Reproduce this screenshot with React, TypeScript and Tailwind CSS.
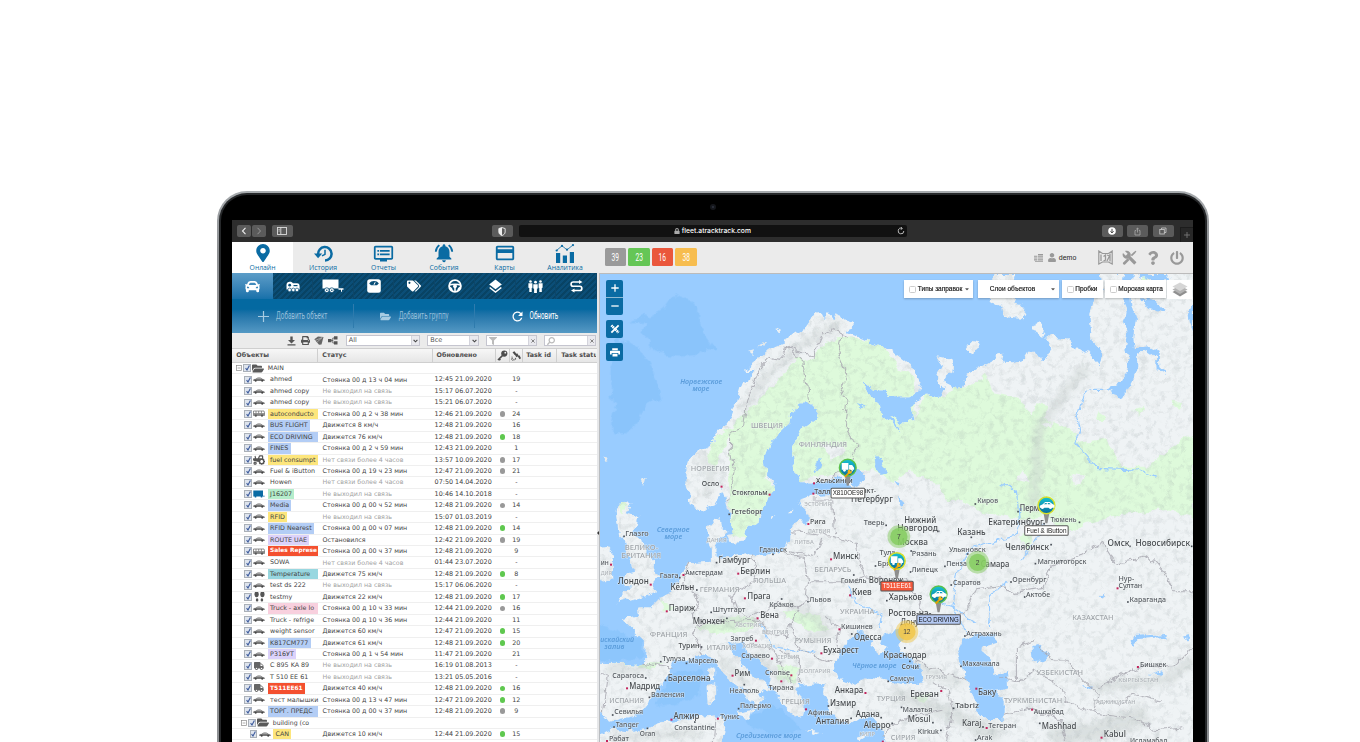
import React from "react";
import { FaMapMarkerAlt, FaCar, FaTags, FaFolderOpen, FaPrint, FaUser, FaPowerOff, FaTruck, FaTractor, FaLock, FaSearch, FaFilter, FaKey, FaQuestion, FaCaretDown } from "react-icons/fa";
import { MdDvr, MdNotificationsActive, MdCreditCard, MdLayers, MdRefresh } from "react-icons/md";

type Kids = { children?: React.ReactNode };

/* ---------- browser chrome ---------- */

function ChromeButton({ children, w = "w-[21px]" }: Kids & { w?: string }) {
  return <div className={`${w} flex h-[12.5px] items-center justify-center rounded-[2px] bg-[#5b5b5b] text-[#e6e6e6]`}>{children}</div>;
}

function BrowserBar() {
  return (
    <div className="flex h-[22px] shrink-0 items-center bg-[#2d2d2d] pl-[4.5px]">
      <ChromeButton w="w-[14px]">
        <svg className="h-[8px] w-[6px]" viewBox="0 0 6 8" fill="none" stroke="#eee" strokeWidth="1.100"><path d="M4.500 .8 1.500 4l3 3.200" /></svg>
      </ChromeButton>
      <div className="w-px" />
      <ChromeButton w="w-[14px]">
        <svg className="h-[8px] w-[6px]" viewBox="0 0 6 8" fill="none" stroke="#999" strokeWidth="1"><path d="M1.500 .8l3 3.200-3 3.200" /></svg>
      </ChromeButton>
      <div className="w-[6px]" />
      <ChromeButton>
        <svg className="h-[8px] w-[10px]" viewBox="0 0 10 8" fill="none" stroke="#ddd" strokeWidth=".9"><rect x=".5" y=".5" width="9" height="7" /><path d="M3.800 .5v7M1.500 2.400h1.200M1.500 4h1.200" /></svg>
      </ChromeButton>
      <div className="w-[199px]" />
      <ChromeButton>
        <svg className="h-[9px] w-[8px]" viewBox="0 0 7 8"><path d="M3.500 .5 6.300 1.400v3C6.300 6 5 7 3.500 7.600 2 7 .7 6 .7 4.400V1.400z" fill="none" stroke="#eee" strokeWidth=".8" /><path d="M3.500 .5v7.100C2 7 .7 6 .7 4.400V1.400z" fill="#eee" /></svg>
      </ChromeButton>
      <div className="ml-[6px] flex h-[12px] w-[388px] items-center rounded-[2px] bg-[#111]">
        <div className="w-[155px]" />
        <FaLock className="h-[6px] w-[6px] text-[#aaa]" />
        <span className="ml-[2px] font-['Inter',sans-serif] text-[6.750px] font-medium leading-none text-white">fleet.atracktrack.com</span>
        <div className="grow" />
        <svg className="mr-[2px] h-[8px] w-[8px]" viewBox="0 0 8 8" fill="none" stroke="#ccc" strokeWidth=".9"><path d="M6.800 4A2.800 2.800 0 1 1 5 1.400M3.800 .1 5.300 1.400 3.900 2.800" /></svg>
      </div>
      <div className="w-[195px]" />
      <ChromeButton>
        <svg className="h-[8px] w-[8px]" viewBox="0 0 8 8"><circle cx="4" cy="4" r="3.800" fill="#fff" /><path d="M4 1.800v4M2.400 4.300 4 5.900l1.600-1.600" stroke="#444" fill="none" strokeWidth="1" /></svg>
      </ChromeButton>
      <div className="w-[4.500px]" />
      <ChromeButton>
        <svg className="h-[9px] w-[7px]" viewBox="0 0 7 8" fill="none" stroke="#aaa" strokeWidth=".8"><path d="M2.200 3H1v4.500h5V3H4.800M3.500 5V.6M2.200 1.800 3.500 .5l1.300 1.300" /></svg>
      </ChromeButton>
      <div className="w-[4.500px]" />
      <ChromeButton>
        <svg className="h-[8px] w-[8px]" viewBox="0 0 8 8" fill="none" stroke="#ccc" strokeWidth=".8"><rect x=".8" y="2.500" width="4.500" height="4.500" /><path d="M2.500 2.500V1h4.500v4.500H5.300" /></svg>
      </ChromeButton>
      <div className="grow" />
      <div className="flex h-[15px] w-[13.500px] items-center justify-center self-end border-l border-t border-[#1c1c1c] bg-[#272727]">
        <svg className="h-[6px] w-[6px]" viewBox="0 0 6 6" stroke="#777" strokeWidth=".9"><path d="M3 0v6M0 3h6" /></svg>
      </div>
    </div>
  );
}

/* ---------- top navigation ---------- */

function AnalyticsIcon() {
  return (
    <svg className="h-[19px] w-[20px]" viewBox="0 0 20 19" fill="#0a6ba3">
      <path d="M1 9h4.200v10H1zM7.800 11.500H12V19H7.800zM14.800 8H19v11h-4.200z" />
      <path d="M1.500 6.500 7 1.800l5 4L18 1" fill="none" stroke="#0a6ba3" strokeWidth=".8" />
      <circle cx="1.700" cy="6.500" r="1.100" /><circle cx="7" cy="1.900" r="1.100" /><circle cx="12" cy="5.700" r="1.100" /><circle cx="18" cy="1.100" r="1.100" />
    </svg>
  );
}

function HistoryIcon() {
  return (
    <svg className="h-[17px] w-[19px]" viewBox="0 0 19 17">
      <path d="M4.200 9.500A6.700 6.700 0 1 1 11 15.500" fill="none" stroke="#0a6ba3" strokeWidth="2.500" />
      <path d="M0 8.500h8.200L4.100 13.200z" fill="#0a6ba3" />
      <path d="M11 4.800v4.500L8 10.800" fill="none" stroke="#0a6ba3" strokeWidth="1.500" />
    </svg>
  );
}

const NAV: { label: string; icon: React.ReactNode }[] = [
  { label: "Онлайн", icon: <FaMapMarkerAlt className="h-[18px] w-[14px]" /> },
  { label: "История", icon: <HistoryIcon /> },
  { label: "Отчеты", icon: <MdDvr className="h-[21px] w-[21px]" /> },
  { label: "События", icon: <MdNotificationsActive className="h-[22px] w-[22px]" /> },
  { label: "Карты", icon: <MdCreditCard className="h-[22px] w-[22px]" /> },
  { label: "Аналитика", icon: <AnalyticsIcon /> },
];

const COUNTERS: [string, string][] = [["39", "bg-[#9a9a9a]"], ["23", "bg-[#65c656]"], ["16", "bg-[#ea573c]"], ["38", "bg-[#f7bd4f]"]];

function AppHeader() {
  return (
    <div className="flex h-[31px] shrink-0 bg-[#ebebeb]">
      <div className="flex w-[364px]">
        {NAV.map((n, i) => (
          <div key={n.label} className={`flex w-[60.500px] shrink-0 flex-col items-center text-[#0a6ba3] ${i === 0 ? "bg-white" : ""}`}>
            <div className="flex h-[21.500px] items-center pt-[1px]">{n.icon}</div>
            <span className="font-['Open_Sans',sans-serif] text-[6.800px] leading-[8px]">{n.label}</span>
          </div>
        ))}
      </div>
      <div className="ml-[8.700px] mt-[6px] flex gap-[2.300px]">
        {COUNTERS.map(([n, c]) => (
          <div key={n} className={`flex h-[18px] w-[21.200px] items-center justify-center rounded-[1.500px] ${c}`}>
            <span className="inline-block scale-x-[.6] font-['Roboto',sans-serif] text-[11px] leading-none text-white">{n}</span>
          </div>
        ))}
      </div>
      <div className="grow" />
      <div className="mr-[9px] flex items-center text-[#999]">
        <svg className="h-[8px] w-[9px]" viewBox="0 0 9 8" fill="#999"><path d="M4 0h5v1H4zM4 1.600h5v1.200H4zM4 3.400h5v1.200H4zM4 5.200h5v1.200H4zM0 1.800h3.400v1H0zM0 3.400h3.400v1.200H0zM0 5.200h3.400v1.200H0zM1 7h8v.8H1z" /></svg>
        <FaUser className="ml-[5px] h-[9px] w-[8px]" />
        <span className="ml-[3px] font-['Liberation_Sans',sans-serif] text-[7px] leading-none text-[#222]">demo</span>
        <svg className="ml-[22px] h-[15px] w-[15px]" viewBox="0 0 15 15" fill="none" stroke="#999" strokeWidth="1.200"><path d="M.8 1 4.500 3.500h6L14.200 1v13l-3.700-2h-6l-3.700 2z" /><path d="M3 4.500v6.500M5.500 6.500l2-1.500v5l-2 1M9 5l2.500 1-2.500 5M12 3.500v8" strokeWidth="1.300" /></svg>
        <svg className="ml-[9px] h-[15px] w-[15px]" viewBox="0 0 24 24" fill="#999"><path d="M22.700 19l-9.100-9.100c.9-2.300.4-5-1.500-6.900-2-2-5-2.400-7.400-1.300L9 6 6 9 1.600 4.700C.4 7.100.9 10.100 2.900 12.100c1.900 1.900 4.600 2.400 6.900 1.500l9.100 9.100c.4.400 1 .4 1.400 0l2.300-2.300c.5-.4.5-1.100.1-1.400z" /><path d="M14 8l5-5 3-2 1 1-2 3-5 5zM1.500 20.500 9 13l3 3-7.500 7.500c-2 .5-3.500-1-3-3z" /></svg>
        <FaQuestion className="ml-[9px] h-[14px] w-[14px]" />
        <FaPowerOff className="ml-[10px] h-[14px] w-[14px]" />
      </div>
    </div>
  );
}

/* ---------- left panel ---------- */

const TABS: React.ReactNode[] = [
  <FaCar className="h-[15px] w-[15px]" />,
  <svg className="h-[11px] w-[14px]" viewBox="0 0 14 11" fill="#fff"><path d="M.5 4C.5 1.500 2 .8 3.800 .8S6.500 1.500 7 2.200h4c1.800 0 2.600 1.300 2.600 3v3.300H.5z" /><circle cx="3.700" cy="4.200" r="1.400" fill="#0b4f78" /><path d="M7.500 4h4v1.200h-4z" fill="#0b4f78" /><circle cx="3.600" cy="8.900" r="1.800" stroke="#0b4f78" strokeWidth=".7" /><circle cx="7.300" cy="8.900" r="1.800" stroke="#0b4f78" strokeWidth=".7" /><circle cx="11" cy="8.900" r="1.800" stroke="#0b4f78" strokeWidth=".7" /></svg>,
  <svg className="h-[14px] w-[22px]" viewBox="0 0 22 14" fill="#fff"><path d="M.5 .5h16v9H.5zM16.500 9.200h5v1.500H20v2h-1v-2h-2.500z" /><circle cx="4.800" cy="11.200" r="2.400" stroke="#0b4f78" strokeWidth=".8" /><circle cx="9.800" cy="11.200" r="2.400" stroke="#0b4f78" strokeWidth=".8" /><circle cx="4.800" cy="11.200" r=".8" fill="#0b4f78" /><circle cx="9.800" cy="11.200" r=".8" fill="#0b4f78" /></svg>,
  <svg className="h-[14px] w-[14px]" viewBox="0 0 14 14"><rect x=".2" y=".2" width="13.600" height="13.600" rx="2.500" fill="#fff" /><path d="M2.200 4.500C4 1.200 10 1.200 11.800 4.500L10 6.300H4z" fill="#0b4f78" /><path d="M7 5.800 8.200 3.200" stroke="#fff" strokeWidth="1" /></svg>,
  <FaTags className="h-[14px] w-[14px]" />,
  <svg className="h-[14px] w-[14px]" viewBox="0 0 14 14" fill="none" stroke="#fff"><circle cx="7" cy="7" r="5.900" strokeWidth="1.800" /><path d="M1.500 6.200C4 4.800 10 4.800 12.500 6.200M7 7v5.500M4 12c0-2-1-3.200-2.500-3.800M10 12c0-2 1-3.200 2.500-3.800" strokeWidth="1.500" /><circle cx="7" cy="7.300" r="1.500" fill="#fff" /></svg>,
  <MdLayers className="h-[17px] w-[17px]" />,
  <svg className="h-[13px] w-[15px]" viewBox="0 0 15 13" fill="#fff"><circle cx="2.500" cy="1.500" r="1.300" /><circle cx="7.500" cy="2.200" r="1.400" /><circle cx="12.500" cy="1.500" r="1.300" /><path d="M.4 3.300h4v4.500l-.7.300V12H1.300V8.100L.4 7.800zM5.300 4.200h4.400v4.200l-.8.400V13H6.100V8.800l-.8-.4zM10.600 3.300h4v4.500l-.8.300V12h-2.500V8.100l-.7-.3z" /></svg>,
  <svg className="h-[13px] w-[13px]" viewBox="0 0 13 13" fill="none" stroke="#fff" strokeWidth="1.700"><path d="M10 2H3.200a2.100 2.100 0 0 0 0 4.250h6.500a2.100 2.100 0 0 1 0 4.250H3.500" /><path d="M9 0l3.500 2L9 4zM4.500 8.500 1 10.500l3.500 2z" fill="#fff" stroke="none" /></svg>,
];

function Narrow({ children, box, tone }: Kids & { box: string; tone: string }) {
  return (
    <span className={`flex justify-center whitespace-nowrap ${box}`}>
      <span className={`inline-block scale-x-[.6] font-['Roboto',sans-serif] text-[10.500px] leading-none ${tone}`}>{children}</span>
    </span>
  );
}

function Field({ w, children, right }: Kids & { w: string; right: React.ReactNode }) {
  return (
    <div className={`flex h-[11px] items-stretch border border-[#c5c5cf] bg-white ${w}`}>
      <span className="flex grow items-center pl-[2px] font-['DejaVu_Sans',sans-serif] text-[6.500px] leading-none text-[#555]">{children}</span>
      <span className="flex w-[8.500px] items-center justify-center border-l border-[#d4d4dc] bg-[#e9e9ee] text-[#555]">{right}</span>
    </div>
  );
}

const cross = <svg className="h-[4px] w-[4px]" viewBox="0 0 4 4" stroke="#777" strokeWidth=".9"><path d="M.4 .4l3.200 3.200M3.600 .4.4 3.600" /></svg>;
const down = <svg className="h-[4px] w-[5px]" viewBox="0 0 5 4" fill="none" stroke="#444" strokeWidth="1.100"><path d="M.6 .8l1.900 2 1.900-2" /></svg>;

const HEAD = "flex h-full shrink-0 items-center border-r border-[#cfcfcf] font-['DejaVu_Sans',sans-serif] text-[6.350px] font-bold leading-none text-[#4c4c4c] whitespace-nowrap overflow-hidden";

type Row = { n: string; i?: string; c?: string; s?: string; t?: string; d?: "g" | "x"; v?: string; off?: boolean };
const Y = "bg-[#fde67c]", B = "bg-[#b3cdf5]", R = "bg-[#f4502f] font-bold text-white text-[5.900px]", P = "bg-[#dcd2fb]", G = "bg-[#b5edcb]", T = "bg-[#98d7e0]", K = "bg-[#f8d0de]";
const NEVER = "Не выходил на связь", LOST = "Нет связи более 4 часов", D = " 21.09.2020";
const ROWS: Row[] = [
  { n: "ahmed", s: "Стоянка 00 д 13 ч 04 мин", t: "12:45" + D, v: "19" },
  { n: "ahmed copy", s: NEVER, t: "15:17 06.07.2020", v: "-", off: true },
  { n: "ahmed copy", s: NEVER, t: "15:21 06.07.2020", v: "-", off: true },
  { n: "autoconducto", i: "bus", c: Y + " w-[50px]", s: "Стоянка 00 д 2 ч 38 мин", t: "12:46" + D, d: "x", v: "24" },
  { n: "BUS FLIGHT", c: B, s: "Движется 8 км/ч", t: "12:48" + D, v: "16" },
  { n: "ECO DRIVING", c: B + " w-[50px]", s: "Движется 76 км/ч", t: "12:48" + D, d: "g", v: "18" },
  { n: "FINES", c: B, s: "Стоянка 00 д 2 ч 59 мин", t: "12:43" + D, v: "1" },
  { n: "fuel consumpt", i: "tractor", c: Y + " w-[50px]", s: LOST, t: "13:57 10.09.2020", d: "x", v: "17", off: true },
  { n: "Fuel & iButton", s: "Стоянка 00 д 19 ч 23 мин", t: "12:47" + D, d: "x", v: "21" },
  { n: "Howen", s: LOST, t: "07:50 14.04.2020", v: "-", off: true },
  { n: "J16207", i: "blue", c: G, s: NEVER, t: "10:46 14.10.2018", v: "-", off: true },
  { n: "Media", c: B, s: "Стоянка 00 д 00 ч 52 мин", t: "12:48" + D, d: "x", v: "14" },
  { n: "RFID", c: Y, s: NEVER, t: "15:07 01.03.2019", v: "-", off: true },
  { n: "RFID Nearest", c: B, s: "Стоянка 00 д 00 ч 07 мин", t: "12:48" + D, d: "g", v: "14" },
  { n: "ROUTE UAE", c: P, s: "Остановился", t: "12:42" + D, d: "x", v: "19" },
  { n: "Sales Represe", i: "bus", c: R + " w-[50px]", s: "Стоянка 00 д 00 ч 37 мин", t: "12:48" + D, v: "9" },
  { n: "SOWA", s: LOST, t: "01:44 23.07.2020", v: "-", off: true },
  { n: "Temperature", c: T + " w-[50px]", s: "Движется 75 км/ч", t: "12:48" + D, d: "g", v: "8" },
  { n: "test ds 222", s: NEVER, t: "15:17 06.06.2020", v: "-", off: true },
  { n: "testmy", i: "feet", s: "Движется 22 км/ч", t: "12:48" + D, d: "g", v: "17" },
  { n: "Truck - axle lo", c: K + " w-[50px]", s: "Стоянка 00 д 10 ч 33 мин", t: "12:44" + D, d: "x", v: "16" },
  { n: "Truck - refrige", s: "Стоянка 00 д 10 ч 36 мин", t: "12:44" + D, v: "11" },
  { n: "weight sensor", s: "Движется 60 км/ч", t: "12:47" + D, d: "g", v: "15" },
  { n: "K817CM777", c: B, s: "Движется 61 км/ч", t: "12:48" + D, d: "g", v: "20" },
  { n: "P316УТ", c: P, s: "Стоянка 00 д 1 ч 54 мин", t: "11:47" + D, v: "21" },
  { n: "C 895 KA 89", i: "truck", s: NEVER, t: "16:19 01.08.2013", v: "-", off: true },
  { n: "T 510 EE 61", s: NEVER, t: "13:21 05.05.2016", v: "-", off: true },
  { n: "T511EE61", i: "truck", c: R, s: "Движется 40 км/ч", t: "12:48" + D, d: "g", v: "16" },
  { n: "тест малышки", s: "Стоянка 00 д 13 ч 47 мин", t: "12:47" + D, d: "g", v: "12" },
  { n: "ТОРГ. ПРЕДС", c: B + " w-[50px]", s: "Стоянка 00 д 00 ч 37 мин", t: "12:48" + D, d: "x", v: "9" },
];

function Check() {
  return (
    <span className="flex h-[8px] w-[7.500px] shrink-0 items-center justify-center border border-[#aab0b8] bg-[#dfe5ee]">
      <svg className="h-[6px] w-[5px]" viewBox="0 0 5 6" fill="none" stroke="#3c5a9c" strokeWidth="1.100"><path d="M.6 3.200 2 5 4.400 .6" /></svg>
    </span>
  );
}

function RowIcon({ kind }: { kind?: string }) {
  if (kind === "bus") return <svg className="h-[7px] w-[12px]" viewBox="0 0 12 7"><path d="M.5 1h10.500l.5 2v2.500H.5zM.5 3.600h11M3 1v2.500M5.700 1v2.500M8.400 1v2.500" fill="none" stroke="#666" strokeWidth=".7" /><path d="M.5 3.600h11v1.900H.5z" fill="#888" /><circle cx="2.800" cy="5.700" r="1.100" fill="#555" /><circle cx="9" cy="5.700" r="1.100" fill="#555" /></svg>;
  if (kind === "tractor") return <FaTractor className="h-[10px] w-[12px] -scale-x-100 text-[#555]" />;
  if (kind === "truck") return <FaTruck className="h-[8px] w-[12px] text-[#666]" />;
  if (kind === "blue") return <svg className="h-[8px] w-[12px]" viewBox="0 0 12 8" fill="#0a6ba3"><path d="M.3 .5h9.700v5.200h1.700v.9H.3z" /><circle cx="2.500" cy="6.700" r=".9" /><circle cx="8.500" cy="6.700" r=".9" /></svg>;
  if (kind === "feet") return <svg className="h-[11px] w-[11px]" viewBox="0 0 11 11" fill="#555"><ellipse cx="2.600" cy="3.300" rx="2.100" ry="3" /><ellipse cx="8.400" cy="3.300" rx="2.100" ry="3" /><ellipse cx="3.100" cy="8.900" rx="1.300" ry="1.600" /><ellipse cx="7.900" cy="8.900" rx="1.300" ry="1.600" /></svg>;
  return <svg className="h-[5px] w-[12px]" viewBox="0 0 12 5"><path d="M.3 2.800C.6 2.200 2 2 2.800 1.800 3.800 .9 4.500 .6 6 .6c1.600 0 2.400.5 3.200 1.200 1.200.1 2.200.5 2.500 1.300v1H.3z" fill="#777" /><path d="M3.900 1.800l1-.6h.8v.6zM6.300 1.200h.9l1.100.6h-2z" fill="#eee" /><circle cx="2.700" cy="3.800" r="1" fill="#444" /><circle cx="9.200" cy="3.800" r="1" fill="#444" /></svg>;
}

function Expander() {
  return <svg className="h-[6px] w-[6px] shrink-0" viewBox="0 0 6 6" fill="#fff" stroke="#8a8a8a" strokeWidth=".7"><rect x=".5" y=".5" width="5" height="5" /><path d="M1.600 3h2.800" /></svg>;
}

function GroupRow({ name, pad }: { name: string; pad: string }) {
  return (
    <div className={`flex h-[11.440px] shrink-0 items-center border-b border-[#efefef] ${pad}`}>
      <Expander />
      <span className="w-[1px]" />
      <Check />
      <FaFolderOpen className="ml-[1px] h-[11px] w-[12px] text-[#5a5a5a]" />
      <span className="ml-[4px] text-[6.200px]">{name}</span>
    </div>
  );
}

function DataRow({ r, nested }: { r: Row; nested?: boolean }) {
  return (
    <div className="flex h-[11.440px] shrink-0 items-center border-b border-[#efefef]">
      <div className={`flex h-full w-[86.300px] shrink-0 items-center overflow-hidden ${nested ? "pl-[17.500px]" : "pl-[12px]"}`}>
        <Check />
        <span className="ml-[1px] flex w-[12.500px] shrink-0 justify-center"><RowIcon kind={r.i} /></span>
        <span className={`ml-[2.500px] flex h-[10.500px] shrink-0 items-center pl-[2.300px] pr-[2.300px] ${r.c ?? ""}`}>{r.n}</span>
      </div>
      <span className={`w-[116px] shrink-0 pl-[4px] text-[6.300px] ${r.off ? "text-[#a2a2a2]" : ""}`}>{r.s}</span>
      <span className="w-[62px] shrink-0 text-[6.420px]">{r.t}</span>
      <span className="flex w-[12px] justify-center">
        {r.d && <span className={`h-[5.800px] w-[5.800px] rounded-full ${r.d === "g" ? "bg-[#5fc84f]" : "bg-[#999]"}`} />}
      </span>
      <span className="w-[15.500px] text-center">{r.v}</span>
    </div>
  );
}

function LeftPanel() {
  return (
    <div className="flex h-full w-[364.500px] shrink-0 flex-col bg-white">
      <div className="flex h-[26px] shrink-0 bg-[#0a4c74] bg-[repeating-linear-gradient(135deg,#084364_0_2px,#0b4e77_2px_4px)]">
        {TABS.map((t, i) => (
          <div key={i} className={`flex w-[40.500px] shrink-0 items-center justify-center text-white ${i === 0 ? "bg-linear-to-b from-[#5c9dc8] to-[#1671aa]" : "border-r border-[#0d4669]"}`}>{t}</div>
        ))}
      </div>
      <div className="flex h-[34px] shrink-0 items-center bg-linear-to-b from-[#0469a1] from-30% to-[#5499c4]">
        <div className="flex h-[24px] w-[121.500px] shrink-0 items-center border-r border-[#2e7bad] pl-[26px]">
          <svg className="h-[11px] w-[11px]" viewBox="0 0 11 11" stroke="#a7cbe2" strokeWidth="1.200"><path d="M5.500 0v11M0 5.500h11" /></svg>
          <Narrow box="ml-[7px] w-[51px]" tone="text-[#94bfda]">Добавить объект</Narrow>
        </div>
        <div className="flex h-[24px] w-[121.500px] shrink-0 items-center border-r border-[#2e7bad] pl-[26px]">
          <FaFolderOpen className="h-[11px] w-[11px] text-[#a7cbe2]" />
          <Narrow box="ml-[7px] w-[51px]" tone="text-[#94bfda]">Добавить группу</Narrow>
        </div>
        <div className="flex items-center pl-[35px]">
          <MdRefresh className="h-[15px] w-[15px] text-white" />
          <Narrow box="ml-[4px] w-[29px]" tone="text-white">Обновить</Narrow>
        </div>
      </div>
      <div className="flex h-[15px] shrink-0 items-center bg-[#ebebeb] pl-[54.500px] text-[#555]">
        <svg className="h-[10px] w-[9px] shrink-0" viewBox="0 0 9 10" fill="#555"><path d="M3.300 .5h2.400v3.500h2.300L4.500 7.500 1 4h2.300zM.5 8.300h8v1.200h-8z" /></svg>
        <FaPrint className="ml-[5px] h-[9px] w-[9px] shrink-0" />
        <svg className="ml-[4.500px] h-[9px] w-[10px] shrink-0" viewBox="0 0 10 9" fill="#666"><path d="M.3 3.200 4 .5l5.500 .4L7.500 8.500 5 8.800z" /><path d="M1 4.500 8.500 1.500M3 6.200l5-4.500" stroke="#ddd" strokeWidth=".5" /></svg>
        <svg className="ml-[4px] h-[9px] w-[10px] shrink-0" viewBox="0 0 10 9" fill="#555"><path d="M0 3h3.500v3.200H0zM6 .3h3.500v3.300H6zM6 5.300h3.500v3.300H6z" /><path d="M3 4.500h2M6 2H4.800v5H6" fill="none" stroke="#555" strokeWidth=".8" /></svg>
        <div className="w-[7.500px] shrink-0" />
        <Field w="w-[74.500px]" right={down}>All</Field>
        <div className="w-[7px]" />
        <Field w="w-[51.500px]" right={down}>Все</Field>
        <div className="w-[7px]" />
        <Field w="w-[51.500px]" right={cross}><FaFilter className="h-[8px] w-[8px] text-[#bbb]" /></Field>
        <div className="w-[7px]" />
        <Field w="w-[52px]" right={cross}><FaSearch className="h-[8px] w-[8px] -scale-x-100 text-[#bbb]" /></Field>
      </div>
      <div className="flex h-[15px] shrink-0 items-center overflow-hidden border-b border-t border-[#cfcfcf] bg-linear-to-b from-[#f7f7f7] to-[#e6e6e6]">
        <div className={`${HEAD} w-[86px] pl-[4px]`}>Объекты</div>
        <div className={`${HEAD} w-[114.300px] pl-[4px]`}>Статус</div>
        <div className={`${HEAD} w-[63px] pl-[4px]`}>Обновлено</div>
        <div className={`${HEAD} w-[14px] justify-center`}>
          <svg className="h-[11px] w-[11px]" viewBox="0 0 11 11"><circle cx="7.300" cy="3.600" r="3.100" fill="#4c4c4c" /><circle cx="8.300" cy="2.700" r=".9" fill="#eee" /><path d="M5.500 5.500 1 10M2 8.800l1.400 1.200" stroke="#4c4c4c" strokeWidth="1.700" /></svg>
        </div>
        <div className={`${HEAD} w-[13.700px] justify-center`}>
          <svg className="h-[10px] w-[10px]" viewBox="0 0 10 10" fill="#4c4c4c"><path d="M1.500 1.200 3.500 .2l1.800 2.600-1.700 1.200zM3.800 3.800l2.400-1.600 1.600 2.600-2.300 1.500zM6.800 5.500l1.700-1.200 1.500 2.900-1.500 1zM4 6.400l1.300 1.700-1.500 1z" /><path d="M1 5.500c0 2 1 3 2.800 3.500M0 7c.3 1.500 1 2.300 2.500 2.700" fill="none" stroke="#4c4c4c" strokeWidth=".7" /></svg>
        </div>
        <div className={`${HEAD} w-[34px] pl-[3px]`}>Task id</div>
        <div className={`${HEAD} w-[39px] border-r-0 pl-[4px]`}>Task status</div>
      </div>
      <div className="flex min-h-0 grow flex-col overflow-hidden whitespace-nowrap font-['DejaVu_Sans',sans-serif] text-[6.350px] leading-none text-[#444]">
        <GroupRow name="MAIN" pad="pl-[4px]" />
        {ROWS.map((r, i) => <DataRow key={i} r={r} />)}
        <GroupRow name="building (co" pad="pl-[9px]" />
        <DataRow nested r={{ n: "CAN", c: Y, s: "Движется 10 км/ч", t: "12:44" + D, d: "g", v: "15" }} />
      </div>
    </div>
  );
}

/* ---------- map ---------- */

const LAND = `M272 706 L262 640 L262 575 L300 540 L340 520 L348 496 L380 462 L400 430 L412 390 L425 345 L455 328 L462 300 L440 300 L485 262 L510 240 L560 215 L580 180 L605 190 L640 140 L660 125 L672 150 L690 124 L705 150 L712 122 L730 150 L762 160 L745 185 L790 205 L830 228 L870 240
L910 270 L945 300 L963 335 L955 365 L930 382 L890 382 L850 365 L810 350 L788 335 L810 380 L838 405 L842 432 L875 455 L900 490 L895 470 L873 436 L910 458 L945 450 L936 410 L980 370 L1020 385 L1035 352 L1020 345 L1015 320 L1030 290 L1010 262 L1055 270 L1067 295 L1035 320 L1040 345 L1060 355 L1090 350 L1100 315 L1140 290 L1180 270 L1190 250 L1212 248 L1205 278 L1240 280 L1270 270 L1285 245 L1310 245 L1320 275 L1340 262 L1355 240 L1340 198 L1400 205 L1430 235 L1470 250 L1497 280 L1505 240 L1480 215 L1470 180 L1465 130 L1480 85 L1510 55 L1508 12 L1570 12 L1565 40 L1570 85 L1580 130 L1575 160 L1585 190 L1578 230 L1590 265 L1580 310 L1550 345 L1530 355 L1540 372 L1570 382 L1590 345 L1615 300 L1615 252 L1640 242 L1668 262 L1670 300 L1698 314 L1698 306 L1678 295 L1676 245 L1645 228 L1605 235 L1600 200 L1608 150 L1595 110 L1590 60 L1600 12 L1800 0 L1800 1430
L856 1430 L850 1380 L820 1345 L785 1345 L755 1365 L720 1350 L685 1330 L688 1290 L668 1270 L672 1245 L720 1232 L690 1245 L650 1240 L600 1245 L590 1260 L615 1290 L608 1345 L580 1330 L550 1300 L530 1270 L510 1240 L518 1210 L500 1190 L470 1165 L445 1145 L438 1115 L415 1120 L388 1122 L392 1140 L420 1170 L450 1210 L490 1232 L518 1262 L492 1255 L480 1270 L492 1292 L462 1320 L455 1295 L440 1265 L400 1235 L370 1210 L345 1168 L310 1155 L270 1172 L225 1168 L212 1200 L198 1230 L160 1270 L150 1300 L120 1335 L60 1348 L30 1355 L10 1330 L-10 1330 L-10 1178 L60 1180 L110 1188 L138 1178 L140 1120 L110 1090 L68 1048 L112 1036 L125 1018 L160 1018 L170 995 L205 975 L225 950 L248 905 L270 880 L335 875 L335 840 L320 780 L345 748 L365 742 L368 770 L385 785 L352 820 L352 860 L400 858 L440 850 L500 855 L560 842 L572 810 L575 775 L598 745 L620 770 L632 740 L610 720 L598 690 L640 675 L700 672 L750 660 L752 640 L720 622 L660 642 L605 640 L585 600 L575 530 L600 485 L645 452 L656 420 L640 400 L600 400 L576 420 L570 460 L540 490 L510 520 L495 560 L500 610 L525 640 L520 665 L500 690 L485 740 L450 770 L432 812 L405 815 L396 760 L382 700 L370 660 L345 705 L310 722 Z`;

const GREEN = `M350 500 L400 470 L440 420 L480 380 L520 345 L560 285 L590 258 L620 280 L680 220 L720 200 L780 205 L840 225 L900 290 L945 320 L945 450 L980 370 L1030 385 L1060 355 L1090 350 L1125 345 L1160 310 L1180 370 L1260 385 L1300 440 L1310 400 L1345 405 L1335 450 L1370 460 L1430 490 L1430 520 L1520 505 L1570 590 L1650 590 L1710 530 L1779 490 L1779 740 L1700 720 L1560 735 L1470 760 L1390 790 L1350 740 L1270 750 L1160 730 L1090 690 L1040 690 L1010 650 L930 600 L880 640 L820 600 L760 610 L640 620 L600 640 L560 560 L520 560 L500 620 L530 660 L480 740 L440 800 L400 800 L385 650 L395 500 L370 540 L345 600 L320 560 Z`;

const INNER_SEAS = [
  "M703 1200 L720 1150 L745 1112 L772 1085 L800 1092 L818 1112 L812 1132 L838 1150 L868 1132 L842 1118 L850 1095 L880 1082 L925 1075 L915 1110 L888 1122 L900 1145 L935 1165 L965 1195 L972 1225 L955 1248 L900 1240 L860 1228 L810 1220 L770 1238 L735 1235 L712 1225 Z",
  "M1072 1150 L1090 1110 L1130 1092 L1190 1092 L1190 1118 L1150 1130 L1148 1150 L1175 1170 L1185 1215 L1225 1200 L1228 1250 L1190 1262 L1212 1290 L1212 1350 L1160 1350 L1130 1320 L1112 1260 L1085 1190 Z",
  "M742 615 L770 590 L795 610 L790 640 L765 650 Z",
  "M825 550 L845 570 L862 605 L840 615 L828 590 Z",
  "M648 590 L660 560 L664 580 L655 608 Z",
  "M772 398 L795 405 L790 418 Z",
  "M1295 1125 L1320 1122 L1348 1155 L1325 1182 L1298 1160 Z",
  "M1592 1115 L1600 1098 L1700 1092 L1700 1100 L1610 1108 L1600 1135 Z",
  "M1650 1210 L1685 1200 L1680 1214 Z", "M1745 1100 L1760 1095 L1765 1115 Z",
  "M1445 1245 L1480 1250 L1470 1258 Z", "M1500 980 L1515 970 L1510 990 Z",
  "M1625 85 L1665 90 L1690 118 L1690 130 L1640 110 Z", "M1610 12 L1700 12 L1710 30 L1640 34 Z",
  "M1765 130 L1779 100 L1779 180 L1770 160 Z", "M885 636 L900 640 L895 650 Z", "M895 680 L915 700 L905 715 Z",
];

const ISLANDS = [
  "M50 720 L70 700 L90 712 L80 730 L118 740 L112 770 L98 795 L130 810 L140 850 L165 875 L162 905 L185 915 L160 945 L175 965 L110 985 L55 1000 L75 970 L100 950 L70 945 L80 910 L105 905 L100 860 L75 850 L85 820 L60 800 L55 760 Z",
  "M-5 830 L30 828 L48 850 L38 890 L40 925 L-5 940 Z",
  "M330 1200 L345 1195 L345 1230 L332 1228 Z", "M322 1245 L348 1240 L348 1295 L325 1300 Z",
  "M415 1325 L460 1318 L452 1345 L420 1335 Z", "M620 1385 L668 1388 L650 1395 Z", "M775 1400 L810 1385 L795 1400 L782 1408 Z",
  "M-5 1395 L40 1375 L100 1382 L150 1372 L215 1352 L290 1342 L350 1336 L375 1345 L378 1380 L362 1430 L-5 1430 Z",
  "M385 795 L415 790 L412 818 L390 815 Z", "M516 735 L526 728 L520 755 Z", "M560 725 L580 722 L570 735 Z",
  "M1102 235 L1115 215 L1135 220 L1138 238 L1115 250 Z",
  "M1185 12 L1245 12 L1240 50 L1248 90 L1280 130 L1270 148 L1210 140 L1205 110 L1170 90 L1175 60 Z",
  "M1303 165 L1315 162 L1338 190 L1332 200 L1308 185 Z",
  "M125 630 L140 620 L132 645 Z", "M18 560 L30 562 L24 572 Z", "M60 705 L95 700 L80 715 Z",
  "M450 245 L470 240 L462 255 Z", "M480 225 L500 215 L492 230 Z", "M525 185 L545 175 L540 190 Z",
  "M1500 12 L1530 12 L1520 60 L1505 50 Z",
];

const BORDERS = [
  "M385 690 L405 600 L393 540 L395 485 L430 470 L440 390 L485 290 L512 262 L545 268 L560 225 L590 245 L640 258 L670 190 L700 176 L730 192 L745 205",
  "M560 228 L610 275 L622 340 L628 400", "M730 192 L715 250 L742 310 L725 345 L745 400 L738 450 L752 495 L772 530 L752 575 L700 625",
  "M272 878 L245 940 L280 960 L300 1000 L275 1040 L310 1050 L280 1090 L300 1130 L310 1155", "M460 850 L470 930 L395 980 L410 1020 L450 1045 L475 1030 L540 1000 L600 1015 L620 985 L625 930 L610 860 L560 850",
  "M575 785 L640 790 L700 800 L770 820 L780 870 L795 920 L760 935 L630 935", "M640 690 L700 690 L705 790 M575 845 L650 860 L670 810",
  "M795 920 L850 930 L920 930 L960 1000 L1000 1060", "M600 1015 L575 1060 L560 1100 L500 1085 L480 1050 L380 1055 L300 1065",
  "M680 1045 L720 1080 L710 1130 M575 1060 L600 1140 L700 1180", "M430 1120 L520 1140 L560 1210 L580 1240 M540 1140 L600 1170 L600 1240",
  "M130 1180 L220 1195 M-5 1210 L25 1215 L10 1330", "M40 1390 L50 1430 M350 1345 L345 1430",
  "M1070 1060 L1100 1010 L1130 960 L1200 950 L1250 970 L1330 955 L1350 890 L1430 860 L1510 815 L1550 880 L1600 870 L1640 855 L1700 920 L1722 965 L1779 965",
  "M1250 1235 L1250 1130 L1310 1110 M1200 1220 L1260 1235 L1300 1200 L1370 1240 L1400 1290 L1480 1330 L1495 1270 L1450 1230 L1400 1170 L1360 1170 L1320 1130",
  "M1495 1250 L1560 1220 L1620 1190 L1720 1190 L1779 1130", "M950 1175 L1040 1210 L1100 1230 M1000 1235 L1050 1270 L1060 1320 L1040 1416",
  "M850 1400 L900 1350 L990 1330 L1030 1320 M1212 1330 L1290 1315 L1380 1350 L1400 1416 M1480 1330 L1600 1345 L1660 1380 L1750 1370",
  "M1480 1290 L1560 1300 L1600 1270 L1680 1290",
];

const RIVERS = [
  "M1550 355 L1480 355 L1450 370 L1430 440 L1440 480 L1425 520 L1490 595 L1620 600 L1665 622",
  "M1100 1090 L1060 1010 L1075 900 L1120 830 L1240 800 L1260 760 L1250 660 L1200 640", "M1170 1080 L1165 980 L1220 940",
  "M750 950 L770 1000 L845 1035 L840 1080", "M480 1060 L520 1130 L650 1150", "M1130 1060 L1060 1010 L1000 990", "M1270 870 L1340 760",
];

type Label = [string, number, number, number, string];
const DOT = "#c2255c";
/* text, left, vertical centre, width, class */
const LABELS: Label[] = [
  ["Норвежское", 243, 334, 126, "s"], ["море", 280, 356, 50, "s"], ["ШВЕЦИЯ", 455, 466, 96, "k"], ["ФИНЛЯНДИЯ", 598, 524, 145, "k"], ["НОРВЕГИЯ", 275, 595, 116, "k"],
  ["Осло", 308, 641, 52, "c"], ["Стокгольм", 398, 666, 107, "c"], ["Хельсинки", 650, 631, 110, "c"], ["Таллин", 645, 663, 75, "c"], ["Санкт-", 760, 660, 70, "c"], ["Петербург", 755, 686, 125, "C"], ["ЭСТОНИЯ", 615, 701, 80, "k2"],
  ["Гетеборг", 396, 725, 94, "c"], ["Рига", 632, 753, 47, "c"], ["ЛАТВИЯ", 625, 782, 68, "k2"], ["ЛИТВА", 585, 816, 58, "k2"], ["Тверь", 793, 757, 62, "m"], ["Глазго", 79, 791, 70, "m"],
  ["Северное", 173, 778, 98, "s"], ["море", 196, 800, 53, "s"], ["ВЕЛИКО-", 77, 832, 100, "k"], ["БРИТАНИЯ", 67, 857, 119, "k"], ["ДАНИЯ", 322, 809, 60, "k2"], ["Гданьск", 480, 839, 83, "m"], ["ин", 5, 878, 24, "m"], ["ДИЯ", 5, 909, 34, "k2"],
  ["Гамбург", 358, 869, 96, "C"], ["Берлин", 423, 902, 90, "C"], ["Минск", 701, 858, 77, "C"], ["Брянск", 834, 880, 75, "m"], ["Тула", 840, 848, 48, "m"], ["БЕЛАРУСЬ", 645, 898, 111, "k"], ["Гомель", 724, 932, 77, "m"], ["Воронеж", 808, 929, 104, "C"],
  ["Гаага", 182, 916, 56, "m"], ["Амстердам", 258, 907, 113, "m"], ["Лондон", 57, 934, 92, "C"], ["Кёльн", 214, 952, 71, "C"], ["ГЕРМАНИЯ", 302, 958, 119, "k"], ["ПОЛЬША", 461, 931, 99, "k"], ["Прага", 444, 978, 70, "C"], ["Краков", 510, 1003, 73, "m"], ["Львов", 630, 988, 65, "m"], ["Киев", 758, 967, 59, "C"], ["Харьков", 868, 982, 100, "C"],
  ["Париж", 209, 1015, 79, "C"], ["Штутгарт", 341, 1019, 97, "m"], ["Мюнхен", 281, 1054, 96, "C"], ["Вена", 483, 1036, 56, "C"], ["АВСТРИЯ", 408, 1064, 78, "k2"], ["ВЕНГРИЯ", 488, 1087, 79, "k2"], ["УКРАИНА", 722, 1023, 103, "k"], ["Ростов-на-", 866, 1030, 130, "C"], ["Дону", 903, 1056, 55, "C"],
  ["ФРАНЦИЯ", 152, 1092, 113, "k"], ["Загреб", 394, 1105, 68, "m"], ["Турин", 238, 1127, 63, "c"], ["ИТАЛИЯ", 322, 1132, 89, "k"], ["ХОРВАТИЯ", 430, 1128, 90, "k2"], ["РУМЫНИЯ", 586, 1110, 110, "k"], ["Бухарест", 671, 1141, 107, "C"], ["Кишинев", 725, 1071, 95, "m"], ["Одесса", 764, 1102, 83, "C"], ["Краснодар", 852, 1155, 129, "C"],
  ["искайский", 4, 1108, 101, "s"], ["залив", 16, 1131, 60, "s"], ["Тулуза", 190, 1166, 69, "m"], ["Марсель", 267, 1172, 90, "m"], ["Сараево", 426, 1158, 86, "m"], ["СЕРБИЯ", 532, 1160, 68, "k2"], ["Барселона", 206, 1223, 128, "C"], ["Сарагоса", 40, 1217, 95, "m"], ["Мадрид", 91, 1247, 92, "C"], ["Валенсия", 156, 1273, 100, "m"], ["ИСПАНИЯ", 31, 1291, 104, "k"], ["Севилья", 46, 1326, 86, "m"],
  ["Рим", 406, 1208, 47, "C"], ["Скопье", 497, 1208, 75, "m"], ["БОЛГАРИЯ", 602, 1202, 91, "k2"], ["Чёрное море", 758, 1187, 133, "s"], ["Сочи", 906, 1189, 52, "c"], ["Самсун", 871, 1227, 73, "m"], ["Тирана", 508, 1252, 75, "m"], ["Неаполь", 391, 1262, 89, "m"], ["Палермо", 422, 1306, 94, "m"], ["ГРЕЦИЯ", 546, 1295, 85, "k"],
  ["Анкара", 706, 1261, 86, "C"], ["Измир", 692, 1298, 78, "C"], ["Афины", 626, 1327, 73, "m"], ["Анталия", 650, 1354, 99, "C"], ["Адана", 769, 1332, 72, "C"], ["Aleppo", 793, 1365, 80, "C"], ["ТУРЦИЯ", 832, 1285, 87, "k"], ["КИПР", 780, 1393, 46, "k2"], ["СИРИЯ", 874, 1403, 74, "k"],
  ["Алжир", 223, 1339, 78, "C"], ["Тунис", 363, 1339, 58, "m"], ["Tanger", 50, 1365, 69, "m"], ["Oran", 122, 1390, 47, "m"], ["Constantine", 225, 1373, 122, "m"], ["Рабат", 30, 1407, 60, "m"], ["Средиземное море", 410, 1397, 196, "s"],
  ["Нижний", 914, 749, 96, "C"], ["Новгород", 893, 775, 122, "C"], ["Москва", 893, 815, 92, "C"], ["Рязань", 937, 850, 74, "m"], ["Липецк", 936, 899, 79, "m"], ["Пенза", 1040, 881, 62, "m"], ["Ульяновск", 1048, 838, 110, "m"], ["Казань", 1073, 785, 85, "C"], ["Киров", 1133, 693, 62, "m"], ["Пермь", 1260, 715, 72, "C"], ["Екатеринбург", 1166, 756, 166, "C"], ["Тюмень", 1352, 749, 78, "m"],
  ["Челябинск", 1217, 832, 131, "C"], ["Магнитогорск", 1313, 874, 147, "m"], ["Самара", 1143, 881, 86, "C"], ["Саратов", 1060, 937, 83, "m"], ["Оренбург", 1238, 928, 102, "m"], ["Актобе", 1279, 975, 72, "m"], ["Омск", 1523, 819, 66, "C"], ["Новосибирск", 1607, 819, 163, "C"], ["Нур-", 1556, 926, 47, "m"], ["Султан", 1556, 948, 71, "m"], ["Караганда", 1589, 988, 109, "m"], ["КАЗАХСТАН", 1417, 1041, 124, "k"],
  ["Астрахань", 1100, 1090, 106, "m"], ["Махачкала", 1088, 1182, 112, "m"], ["Ереван", 932, 1272, 86, "C"], ["ГРУЗИЯ", 978, 1220, 64, "k2"], ["Баку", 1135, 1266, 55, "C"], ["Tabriz", 1067, 1306, 71, "c"], ["Малатья", 909, 1318, 89, "m"], ["Mosul", 925, 1347, 68, "C"], ["Kirkuk", 955, 1385, 63, "m"], ["Karaj", 1087, 1359, 58, "C"], ["Тегеран", 1166, 1366, 84, "m"], ["Arak", 1132, 1404, 46, "m"],
  ["ТУРКМЕНИСТАН", 1213, 1290, 174, "k"], ["УЗБЕКИСТАН", 1310, 1206, 140, "k"], ["Ашхабад", 1302, 1325, 90, "m"], ["Mashhad", 1326, 1367, 104, "C"], ["Бишкек", 1620, 1184, 79, "m"], ["КЫРГЫЗСТАН", 1555, 1230, 121, "k2"], ["ТАДЖИКИСТАН", 1480, 1297, 127, "k2"], ["Kabul", 1512, 1391, 66, "C"], ["Исламабад", 1590, 1411, 112, "m"],
];
const STYLE: Record<string, { size: number; fill: string; it?: boolean; w?: number }> = {
  C: { size: 25.5, fill: "#484c50", w: 500 }, c: { size: 22.5, fill: "#484c50", w: 500 }, m: { size: 21, fill: "#565b61", w: 500 },
  k: { size: 23, fill: "#a0a5aa", w: 500 }, k2: { size: 18, fill: "#adb2b7", w: 500 }, s: { size: 19, fill: "#5c9ddb", it: true, w: 600 },
};

const RED_DOTS = [[367, 650], [511, 674], [644, 640], [642, 671], [627, 762], [417, 911], [695, 868], [155, 944], [437, 985], [752, 976], [203, 1024], [475, 1045], [470, 1112], [720, 1078], [666, 1150], [84, 1255], [400, 1217], [518, 1166], [576, 1216], [546, 1234], [798, 1269], [620, 1318], [217, 1349], [356, 1346], [36, 884], [253, 915], [1025, 1263], [1130, 1256], [1161, 1374], [1297, 1319], [1614, 1191], [1553, 955], [1505, 1403], [24, 1413], [850, 1415]];
const GREY_DOTS = [[390, 733], [75, 799], [521, 853], [352, 878], [242, 923], [293, 960], [336, 1027], [383, 1045], [547, 987], [626, 995], [763, 915], [307, 1131], [185, 1175], [262, 1180], [140, 1224], [199, 1231], [151, 1282], [41, 1335], [435, 1244], [418, 1316], [687, 1308], [755, 1345], [845, 1343], [878, 1360], [757, 1092], [828, 888], [860, 766], [916, 1134], [931, 1174], [862, 992], [1017, 784], [935, 843], [933, 906], [1036, 889], [1115, 802], [1104, 852], [1127, 702], [1255, 725], [1439, 757], [1333, 761], [1354, 824], [1307, 881], [1055, 945], [1234, 936], [1275, 981], [1590, 829], [1775, 829], [1584, 996], [1096, 1098], [1084, 1189], [1062, 1315], [906, 1312], [1000, 1358], [1024, 1381], [1150, 1371], [1320, 1360], [1128, 1410], [866, 1234], [287, 1356], [145, 1375], [45, 1371]];

function Pin({ x, y, ring, label, lx, lw, ly, fill, color, truck, wrench = true }: { x: number; y: number; ring: string; label: string; lx: number; lw: number; ly: number; fill: string; color: string; truck?: boolean; wrench?: boolean }) {
  return (
    <g>
      <path d={`M${x - 9} ${y + 22} L${x + 9} ${y + 22} L${x + 3} ${y + 54} L${x - 3} ${y + 54} Z`} fill="#8e8e8e" />
      <circle cx={x} cy={y} r="25" fill="url(#pin)" stroke={ring} strokeWidth="4.500" />
      {truck ? (
        <g fill="#fff"><path d={`M${x - 18} ${y - 14}h20v20h-20z M${x + 4} ${y - 8}h9l6 8v6h-15z`} /><circle cx={x - 10} cy={y + 8} r="4" /><circle cx={x + 11} cy={y + 8} r="4" /></g>
      ) : (
        <g fill="#fff"><path d={`M${x - 20} ${y + 1}l9-4 7-7h14l8 6 6 3v8h-44z`} /><path d={`M${x - 8} ${y - 3}l5-4h4v4zM${x + 4} ${y - 7}h5l4 4h-9z`} fill="#1298b4" /><circle cx={x - 12} cy={y + 6} r="5" /><circle cx={x + 12} cy={y + 6} r="5" /></g>
      )}
      {wrench && <g><path d={`M${x - 7} ${y + 26} L${x + 4} ${y + 15}`} stroke="#e3a008" strokeWidth="5.500" strokeLinecap="round" /><circle cx={x + 6} cy={y + 12} r="6.500" fill="#f3b413" /><circle cx={x + 9} cy={y + 9} r="2" fill="#096d9b" /></g>}
      <rect x={lx} y={ly} width={lw} height="29" rx="3" fill={fill} stroke="#555" strokeWidth="3" />
      <text x={lx + lw / 2} y={ly + 21.5} textAnchor="middle" textLength={lw - 10} lengthAdjust="spacingAndGlyphs" fontSize="20" fill={color} fontFamily="Liberation Sans, sans-serif">{label}</text>
    </g>
  );
}

function Cluster({ x, y, n, c }: { x: number; y: number; n: string; c: string }) {
  return (
    <g>
      <circle cx={x} cy={y} r="34" fill={c} opacity=".5" /><circle cx={x} cy={y} r="26" fill={c} opacity=".85" />
      <text x={x} y={y + 7} textAnchor="middle" fontSize="20" fill="#444" fontFamily="Liberation Sans, sans-serif">{n}</text>
    </g>
  );
}

function MapCanvas() {
  return (
    <svg className="absolute inset-0 h-full w-full" viewBox="3 12 1776 1404" preserveAspectRatio="none">
      <defs>
        <filter id="rough" x="0" y="0" width="1800" height="1440" filterUnits="userSpaceOnUse" colorInterpolationFilters="sRGB">
          <feTurbulence type="fractalNoise" baseFrequency=".035" numOctaves="4" seed="4" result="n" />
          <feDisplacementMap in="SourceGraphic" in2="n" scale="26" xChannelSelector="R" yChannelSelector="G" />
        </filter>
        <filter id="relief" x="0" y="0" width="1800" height="1440" filterUnits="userSpaceOnUse" colorInterpolationFilters="sRGB">
          <feTurbulence type="fractalNoise" baseFrequency=".05" numOctaves="4" seed="9" />
          <feColorMatrix values="0 0 0 0 .6  0 0 0 0 .64  0 0 0 0 .65  1.800 0 0 0 -.85" />
        </filter>
        <filter id="soft"><feGaussianBlur stdDeviation="9" /></filter>
        <clipPath id="land"><path d={LAND} />{ISLANDS.map((d, i) => <path key={i} d={d} />)}</clipPath>
        <linearGradient id="pin" x1="0" y1="0" x2="0" y2="1"><stop offset="0" stopColor="#18c3d2" /><stop offset="1" stopColor="#096d9b" /></linearGradient>
      </defs>
      <rect x="0" y="0" width="1800" height="1440" fill="#99ccff" />
      <g filter="url(#rough)" fill="#8ac4fb">
        <path d="M90 158 L130 135 L150 142 L195 115 L215 85 L240 76 L280 92 L300 120 L300 160 L325 200 L350 235 L345 245 L320 235 L290 255 L240 260 L200 255 L155 232 L150 210 L130 190 L145 155 Z" />
        <path d="M50 190 L90 220 L120 235 L150 290 L175 330 L190 395 L160 385 L145 400 L125 435 L110 470 L80 490 L40 490 L40 445 L55 400 L35 385 L38 300 L50 250 Z" />
        <path d="M-5 1060 L60 1085 L130 1110 L130 1160 L60 1175 L-5 1170 Z M440 1345 L520 1300 L570 1340 L610 1380 L520 1395 L450 1365 Z M220 1210 L310 1200 L300 1280 L230 1300 L170 1310 Z M760 1150 L900 1160 L900 1210 L740 1210 Z" opacity=".8" />
      </g>
      <g filter="url(#rough)">
        <g fill="#eff3f5"><path d={LAND} />{ISLANDS.map((d, i) => <path key={i} d={d} />)}</g>
        <g clipPath="url(#land)">
          <path d={GREEN} fill="#defadb" />
          <g fill="#defadb"><path d="M300 1070 L400 1040 L480 1050 L440 1085 L330 1090Z M545 1020 L640 1030 L690 1080 L640 1085 L560 1040Z M530 1190 L600 1190 L590 1240 L540 1230Z M1600 420 L1630 410 L1620 440Z M1715 395 L1745 398 L1735 420Z M1500 425 L1515 450 L1490 450Z M930 1280 L1000 1270 L980 1300Z M1260 800 L1300 780 L1290 850Z M60 700 L85 705 L70 730Z M1630 12 L1650 40 L1625 30Z M40 1180 L190 1180 L170 1195Z M180 990 L230 1010 L200 1020Z" /></g>
          <g fill="#eff3f5"><path d="M1250 630 L1270 600 L1290 640Z M1415 615 L1455 620 L1430 650Z M930 600 L1010 640 L1040 690 L930 690Z M660 520 L740 540 L700 570Z M480 300 L560 250 L590 265 L520 350 L470 400 L440 430 L440 380Z M1330 462 L1360 455 L1350 475Z" /></g>
          <g filter="url(#soft)" fill="none" stroke="#c9d0cf" strokeWidth="20" opacity=".55">
            <path d="M1300 720 L1310 600 L1320 470 L1380 390 L1460 290" strokeWidth="26" /><path d="M300 1080 L360 1050 L470 1055" /><path d="M560 1000 L650 1040 L690 1085 L620 1110" /><path d="M930 1185 L1010 1215 L1090 1240" /><path d="M430 420 L500 320 L600 230 L720 160" /><path d="M300 560 L340 600 L320 680" />
            <path d="M1350 1400 L1500 1380 L1640 1330" strokeWidth="60" /><path d="M1480 1250 L1700 1230 L1779 1170" strokeWidth="30" /><path d="M880 1270 L1050 1330 L1200 1400" strokeWidth="40" /><path d="M20 1200 L140 1200 M40 1400 L300 1390" /><path d="M360 1160 L440 1240 M470 1150 L560 1240" />
          </g>
          <rect x="0" y="0" width="1800" height="1440" filter="url(#relief)" opacity=".35" />
        </g>
        <g fill="#99ccff">{INNER_SEAS.map((d, i) => <path key={i} d={d} />)}</g>
        <g fill="none" stroke="#99ccff" strokeWidth="3.500">{RIVERS.map((d, i) => <path key={i} d={d} />)}</g>
        <g fill="none" stroke="#aaaab2" strokeWidth="3.200" opacity=".85">{BORDERS.map((d, i) => <path key={i} d={d} />)}</g>
      </g>
      <g fill={DOT}>{RED_DOTS.map(([x, y], i) => <rect key={i} x={x - 3} y={y - 3} width="6" height="6" />)}</g>
      <g fill="#4a5058">{GREY_DOTS.map(([x, y], i) => <rect key={i} x={x - 2.5} y={y - 2.5} width="5" height="5" />)}</g>
      <g fontFamily="Noto Sans, sans-serif">
        {LABELS.map(([t, x, y, w, k], i) => {
          const s = STYLE[k];
          return <text key={i} x={x} y={y + s.size * 0.35} textLength={w} lengthAdjust="spacingAndGlyphs" fontSize={s.size} fontWeight={s.w} fontStyle={s.it ? "italic" : "normal"} fill={s.fill} stroke={s.it ? "none" : "#f3f6f7"} strokeWidth="3" strokeOpacity=".6" paintOrder="stroke">{t}</text>;
        })}
      </g>
      <Cluster x={898} y={800} n="7" c="#85cc60" />
      <Cluster x={1134} y={877} n="2" c="#85cc60" />
      <Cluster x={922} y={1085} n="12" c="#f1c74a" />
      <Pin x={745} y={593} ring="#5cc04a" label="X810OE98" lx={695} lw={101} ly={655} fill="#fff" color="#222" truck />
      <Pin x={892} y={873} ring="#d9e02a" label="T511EE61" lx={844} lw={97} ly={934} fill="#f4583c" color="#fff" truck />
      <Pin x={1017} y={973} ring="#5cc04a" label="ECO DRIVING" lx={952} lw={130} ly={1034} fill="#b3c8f2" color="#111" />
      <Pin x={1340} y={706} ring="#d9e02a" label="Fuel & iButton" lx={1275} lw={130} ly={767} fill="#fff" color="#222" wrench={false} />
    </svg>
  );
}

function MapOption({ w, children, box = true, caret }: Kids & { w: string; box?: boolean; caret?: boolean }) {
  return (
    <div className={`flex h-[18px] shrink-0 items-center bg-white px-[5px] shadow-[0_1px_2px_rgba(0,0,0,.25)] ${w}`}>
      {box ? <span className="mr-[1.500px] h-[7px] w-[7px] shrink-0 rounded-[1.500px] border border-[#ccc]" /> : <span className="w-[6.500px] shrink-0" />}
      <span className="whitespace-nowrap font-['Liberation_Sans',sans-serif] text-[6.500px] leading-none text-[#111] [-webkit-text-stroke:.15px_#111]">{children}</span>
      <span className="grow" />
      {caret && <FaCaretDown className="-mr-[2px] h-[6px] w-[6px] shrink-0 text-[#555]" />}
    </div>
  );
}

function MapPanel() {
  return (
    <div className="relative min-w-0 grow overflow-hidden bg-[#99ccff]">
      <MapCanvas />
      <div className="relative flex justify-between pl-[5.500px] pr-[1.500px] pt-[6px]">
        <div className="flex w-[17.500px] flex-col text-white">
          <div className="flex h-[17.500px] items-center justify-center rounded-t-[2px] border-b border-[#8fb9d2] bg-[#0a6ba3]"><svg className="h-[8px] w-[8px]" viewBox="0 0 8 8" stroke="#fff" strokeWidth="1.300"><path d="M4 .3v7.400M.3 4h7.400" /></svg></div>
          <div className="flex h-[17.500px] items-center justify-center rounded-b-[2px] bg-[#0a6ba3]"><svg className="h-[8px] w-[8px]" viewBox="0 0 8 8" stroke="#fff" strokeWidth="1.300"><path d="M.3 4h7.400" /></svg></div>
          <div className="mt-[5px] flex h-[18px] items-center justify-center rounded-[2px] bg-[#0a6ba3]"><svg className="h-[10px] w-[10px]" viewBox="0 0 11 11" stroke="#fff" fill="none"><path d="M1.500 1.500l8 8" strokeWidth="2.800" strokeDasharray="1.600 .5" /><path d="M9.500 1.500l-8 8" strokeWidth="2" /></svg></div>
          <div className="mt-[5px] flex h-[18px] items-center justify-center rounded-[2px] bg-[#0a6ba3]">
            <svg className="h-[9px] w-[10px]" viewBox="0 0 10 9" fill="#fff"><path d="M2.200 .3h5.600v1.900H2.200zM.5 2.700h9c.3 0 .5.200.5.500v3.300H8.300V5H1.700v1.500H0V3.200c0-.3.200-.5.500-.5zM2.500 5.700h5v2.800h-5z" /></svg>
          </div>
        </div>
        <div className="flex h-[18px]">
          <MapOption w="w-[68.500px]" caret>Типы заправок</MapOption>
          <div className="w-[5.500px]" />
          <MapOption w="w-[80.500px]" box={false} caret>Слои объектов</MapOption>
          <div className="w-[3px]" />
          <MapOption w="w-[41px]">Пробки</MapOption>
          <div className="w-[2px]" />
          <MapOption w="w-[61px]">Морская карта</MapOption>
          <div className="w-[1.500px]" />
          <div className="flex h-[19px] w-[24.500px] shrink-0 items-center justify-center bg-white">
            <svg className="h-[15px] w-[16px]" viewBox="0 0 16 15"><path d="M8 6l7.500 4L8 14.500 .5 10z" fill="#8f8f8f" /><path d="M8 3.500l7.500 4L8 12 .5 7.500z" fill="#b3b3b3" /><path d="M8 .5l7.500 4L8 9 .5 4.500z" fill="#d6d6d6" /></svg>
          </div>
        </div>
      </div>
    </div>
  );
}

export default function App() {
  return (
    <div className="h-[742px] w-[1360px] overflow-hidden bg-white pl-[217px] pt-[191px]">
      <div className="h-[600px] w-[992px] rounded-t-[30px] bg-linear-to-b from-[#a7abae] to-[#8e9093] to-10% p-[2px]">
        <div className="h-full rounded-t-[28px] bg-[#26282a] p-[2px]">
          <div className="h-full rounded-t-[26px] bg-black pl-[11.300px] pr-[11.700px]">
            <div className="flex h-[25px] items-center justify-center">
              <span className="mt-[-1px] flex h-[6px] w-[6px] items-center justify-center rounded-full bg-[#15171c]"><span className="h-[2px] w-[2px] rounded-full bg-[#2f3540]" /></span>
            </div>
            <div className="flex h-[522px] flex-col overflow-hidden">
              <BrowserBar />
              <AppHeader />
              <div className="flex min-h-0 grow">
                <LeftPanel />
                <div className="flex w-[3.500px] shrink-0 flex-col justify-center border-r border-[#b9bcc0] bg-[#e6e7e9]">
                  <svg className="mt-[50px] h-[4px] w-[2px]" viewBox="0 0 2 4" fill="#333"><path d="M2 0v4L0 2z" /></svg>
                </div>
                <div className="flex min-w-0 grow border-t border-[#bbb]"><MapPanel /></div>
              </div>
            </div>
          </div>
        </div>
      </div>
    </div>
  );
}
